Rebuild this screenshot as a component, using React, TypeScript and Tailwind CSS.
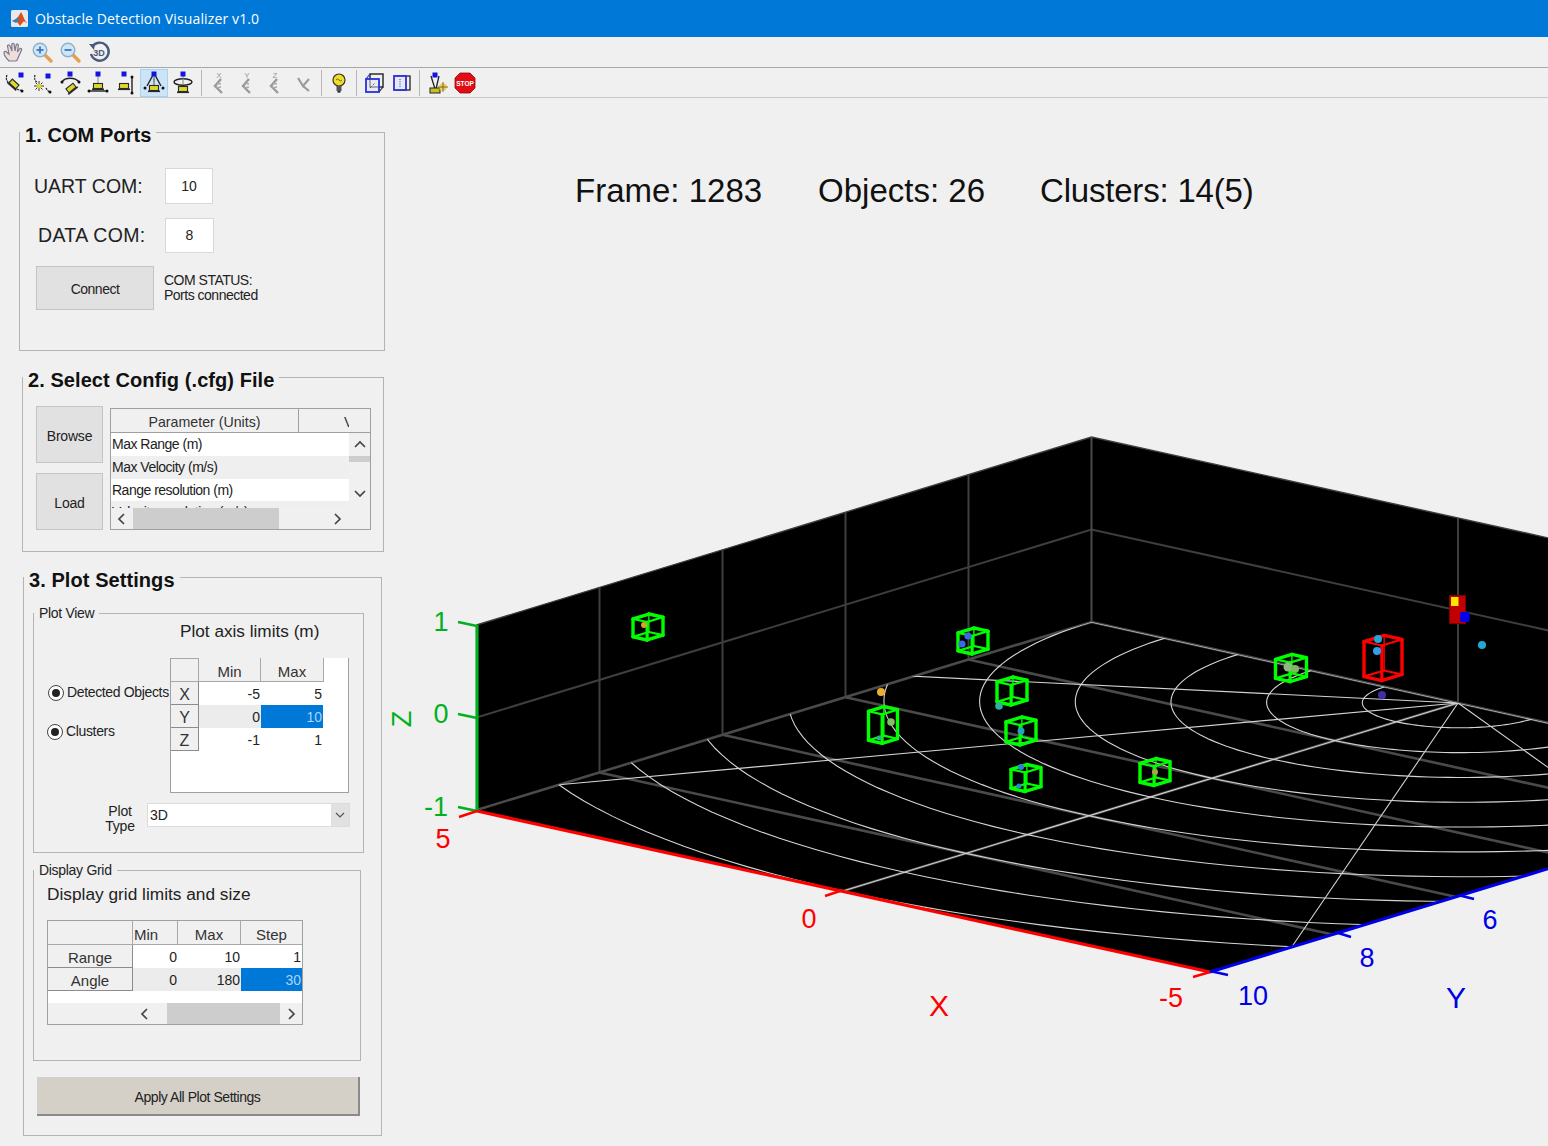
import type { ReactNode } from "react";

const border = "border border-[#a0a0a0]";

// floor projection of the plot: x across the red axis, y along the blue one
const P = (x: number, y: number): [number, number] => [
  1458 - 73.3 * x - 61.5 * y,
  703 - 16.2 * x + 18.8 * y,
];
const Z_UNIT = 92.5;
const pts = (list: [number, number][]) => list.map((p) => p.join(",")).join(" ");

const ringPoints = (r: number) => {
  const out: [number, number][] = [];
  for (let a = 0; a <= 180; a += 2) {
    const t = (a * Math.PI) / 180;
    out.push(P(r * Math.cos(t), r * Math.sin(t)));
  }
  return out;
};

const Cube = ({ cx, cy, w, h, color = "#00ff00" }: { cx: number; cy: number; w: number; h: number; color?: string }) => {
  const a: [number, number] = [w * 0.53, -w * 0.16];
  const c: [number, number] = [w * 0.47, w * 0.105];
  const corner = (i: number, j: number, k: number): [number, number] => [
    cx + (i * a[0] + j * c[0]) / 2,
    cy + (i * a[1] + j * c[1]) / 2 + (k * h) / 2,
  ];
  // last value is the stroke width: outline heavy, hidden inner edges thin
  const edges: [number, number, number, number, number, number, number][] = [
    [-1, -1, -1, 1, -1, -1, 3.4],
    [1, -1, -1, 1, 1, -1, 3.4],
    [1, 1, -1, -1, 1, -1, 2.2],
    [-1, 1, -1, -1, -1, -1, 2.2],
    [-1, -1, 1, 1, -1, 1, 2.2],
    [1, -1, 1, 1, 1, 1, 2.2],
    [1, 1, 1, -1, 1, 1, 3.4],
    [-1, 1, 1, -1, -1, 1, 3.4],
    [-1, -1, -1, -1, -1, 1, 3.4],
    [1, -1, -1, 1, -1, 1, 1.4],
    [1, 1, -1, 1, 1, 1, 3.4],
    [-1, 1, -1, -1, 1, 1, 3.2],
  ];
  return (
    <g stroke={color} strokeLinecap="round">
      {edges.map((e, i) => {
        const s = corner(e[0], e[1], e[2]);
        const t = corner(e[3], e[4], e[5]);
        return <line key={i} x1={s[0]} y1={s[1]} x2={t[0]} y2={t[1]} strokeWidth={e[6]} />;
      })}
    </g>
  );
};

const greenCubes = [
  [648, 627, 30, 18],
  [973, 641, 30, 18],
  [1012, 691, 30, 20],
  [1021, 731, 30, 20],
  [1026, 778, 30, 19],
  [883, 725, 29, 29],
  [1155, 772, 30, 19],
  [1291, 668, 31, 19],
];

const dots: [number, number, number, string][] = [
  [644, 625, 3, "#d8a030"],
  [968, 636, 3.6, "#3d66ee"],
  [962, 644, 3.6, "#3d66ee"],
  [881, 692, 4, "#e8b030"],
  [891, 722, 3.8, "#80c060"],
  [879, 738, 2.5, "#30a8a0"],
  [999, 706, 3.8, "#30b0a0"],
  [1021, 731, 3.5, "#2aa0c0"],
  [1021, 767, 3, "#3080d8"],
  [1019, 786, 2.5, "#3080d8"],
  [1155, 772, 3, "#b0a050"],
  [1288, 667, 4.5, "#90b880"],
  [1295, 669, 4, "#80b860"],
  [1378, 639, 4, "#20a8d8"],
  [1377, 651, 4, "#30a0e8"],
  [1482, 645, 4, "#20a8d0"],
  [1382, 695, 4, "#4030a8"],
];

const PlotLabel = ({ x, y, fill, size = 27, children }: { x: number; y: number; fill: string; size?: number; children: ReactNode }) => (
  <text x={x} y={y} fill={fill} fontSize={size} textAnchor="middle" dominantBaseline="central">
    {children}
  </text>
);

const Plot = () => {
  const floorCorners: [number, number][] = [P(5, 0), P(5, 10), P(-5, 10), P(-5, 0)];
  const back = P(5, 0);
  const left = P(5, 10);
  const right = P(-5, 0);
  const up = (p: [number, number], z: number): [number, number] => [p[0], p[1] - z * Z_UNIT];
  return (
    <svg width={1163} height={736} viewBox="385 410 1163 736" className="block">
      <defs>
        <clipPath id="floor">
          <polygon points={pts(floorCorners)} />
        </clipPath>
      </defs>
      <polygon
        points={pts([up(left, 2), up(back, 2), up(right, 2), right, P(-5, 10), left])}
        fill="#000"
      />
      <g stroke="#3e3e3e" strokeWidth={2} fill="none">
        <polyline points={pts([up(left, 1), up(back, 1), up(right, 1)])} />
        <polyline points={pts([up(left, 2), up(back, 2), up(right, 2)])} strokeWidth={1.4} />
        {[2, 4, 6, 8].map((y) => (
          <line key={y} x1={P(5, y)[0]} y1={P(5, y)[1]} x2={P(5, y)[0]} y2={P(5, y)[1] - 2 * Z_UNIT} />
        ))}
        <line x1={back[0]} y1={back[1]} x2={back[0]} y2={back[1] - 2 * Z_UNIT} stroke="#4a4a4a" />
        <line x1={1458} y1={703} x2={1458} y2={703 - 2 * Z_UNIT} />
      </g>
      <g stroke="#4a4a4a" strokeWidth={2.6} fill="none">
        <polyline points={pts([left, back, right])} />
        {[2, 4, 6, 8].map((y) => (
          <line key={y} x1={P(5, y)[0]} y1={P(5, y)[1]} x2={P(-5, y)[0]} y2={P(-5, y)[1]} />
        ))}
        <line x1={P(0, 0)[0]} y1={P(0, 0)[1]} x2={P(0, 10)[0]} y2={P(0, 10)[1]} />
      </g>
      <g clipPath="url(#floor)" stroke="#d4d4d4" strokeWidth={1.1} fill="none">
        {[1, 2, 3, 4, 5, 6, 7, 8, 9, 10].map((r) => (
          <polyline key={r} points={pts(ringPoints(r))} />
        ))}
        {[0, 30, 60, 90, 120, 150, 180].map((a) => {
          const t = (a * Math.PI) / 180;
          const e = P(10 * Math.cos(t), 10 * Math.sin(t));
          return <line key={a} x1={1458} y1={703} x2={e[0]} y2={e[1]} />;
        })}
      </g>

      {greenCubes.map((c, i) => (
        <Cube key={i} cx={c[0]} cy={c[1]} w={c[2]} h={c[3]} />
      ))}
      <Cube cx={1383} cy={658} w={38} h={35} color="#ff0000" />
      {dots.map((d, i) => (
        <circle key={i} cx={d[0]} cy={d[1]} r={d[2]} fill={d[3]} />
      ))}

      {/* sensor marker */}
      <rect x={1449.5} y={595.5} width={16} height={28} fill="#c00000" stroke="#800000" />
      <rect x={1451} y={597} width={7.5} height={9} fill="#ffe600" />
      <rect x={1460} y={612} width={9.5} height={10} rx={2} fill="#0000ee" />

      {/* axes */}
      <line x1={477} y1={811} x2={1210} y2={972} stroke="#ff0000" strokeWidth={3.2} />
      <line x1={1210} y1={972} x2={1548} y2={868.7} stroke="#0000e6" strokeWidth={3.2} />
      <line x1={477} y1={810} x2={477} y2={625} stroke="#00b020" strokeWidth={3.2} />
      <g stroke="#00b020" strokeWidth={2.4}>
        <line x1={458} y1={622} x2={477} y2={626} />
        <line x1={458} y1={714} x2={477} y2={718} />
        <line x1={458} y1={807} x2={477} y2={811} />
      </g>
      <g stroke="#ff0000" strokeWidth={2.4}>
        <line x1={459} y1={817} x2={477} y2={811} />
        <line x1={825} y1={896} x2={843} y2={890} />
        <line x1={1193} y1={977} x2={1210} y2={972} />
      </g>
      <g stroke="#0000e6" strokeWidth={2.4}>
        <line x1={1210} y1={971} x2={1228} y2={975} />
        <line x1={1335} y1={932} x2={1351} y2={937} />
        <line x1={1458} y1={895} x2={1474} y2={899} />
      </g>

      <PlotLabel x={441} y={622} fill="#00b020">1</PlotLabel>
      <PlotLabel x={441} y={714} fill="#00b020">0</PlotLabel>
      <PlotLabel x={436} y={807} fill="#00b020">-1</PlotLabel>
      <text x={402} y={719} fill="#00b020" fontSize={27} textAnchor="middle" dominantBaseline="central" transform="rotate(-90 402 719)">
        Z
      </text>
      <PlotLabel x={443} y={839} fill="#ff0000">5</PlotLabel>
      <PlotLabel x={809} y={919} fill="#ff0000">0</PlotLabel>
      <PlotLabel x={1171} y={998} fill="#ff0000">-5</PlotLabel>
      <PlotLabel x={939} y={1005} fill="#ff0000" size={30}>X</PlotLabel>
      <PlotLabel x={1253} y={996} fill="#0000e6">10</PlotLabel>
      <PlotLabel x={1367} y={958} fill="#0000e6">8</PlotLabel>
      <PlotLabel x={1490} y={920} fill="#0000e6">6</PlotLabel>
      <PlotLabel x={1456} y={997} fill="#0000e6" size={30}>Y</PlotLabel>
    </svg>
  );
};

const Ico = ({ children, selected }: { children: ReactNode; selected?: boolean }) => (
  <div className={`w-[28px] h-[28px] flex items-center justify-center shrink-0 ${selected ? "bg-[#cce4f7] border border-[#a8d4f2]" : ""}`}>
    <svg width={24} height={24} viewBox="0 0 24 24" className="shrink-0">
      {children}
    </svg>
  </div>
);

const Sep = ({ narrow }: { narrow?: boolean }) => (
  <div className={`w-px h-[26px] bg-[#b8b8b8] shrink-0 ${narrow ? "mx-[3px]" : "mx-[3.5px]"}`} />
);

const Light = ({ x, y }: { x: number; y: number }) => (
  <rect x={x - 2.5} y={y - 2.5} width={5} height={5} fill="#1414e0" />
);
const Cam = ({ x, y, tilt = 0 }: { x: number; y: number; tilt?: number }) => (
  <g transform={`rotate(${tilt} ${x} ${y})`}>
    <rect x={x - 4.5} y={y - 2.5} width={9} height={5} fill="#dcd82c" stroke="#2a2a2a" strokeWidth={1.1} />
    <rect x={x - 6} y={y + 2.5} width={12} height={1.6} fill="#2a2a2a" />
  </g>
);
const Arrow = ({ d }: { d: string }) => <path d={d} stroke="#222" strokeWidth={1.2} fill="none" strokeDasharray="2 0.8" />;
const Tip = ({ x, y }: { x: number; y: number }) => <circle cx={x} cy={y} r={1.5} fill="#111" />;

const Lens = ({ minus }: { minus?: boolean }) => (
  <>
    <line x1={15} y1={15} x2={21} y2={21} stroke="#e6a050" strokeWidth={3.4} strokeLinecap="round" />
    <circle cx={10} cy={10} r={6.8} fill="#cfe6f6" stroke="#8fb0c8" strokeWidth={1.4} />
    <line x1={6.5} y1={10} x2={13.5} y2={10} stroke="#3a78c0" strokeWidth={1.8} />
    {!minus && <line x1={10} y1={6.5} x2={10} y2={13.5} stroke="#3a78c0" strokeWidth={1.8} />}
  </>
);

const AxisIcon = ({ label }: { label: string }) => (
  <>
    <text x={12} y={7} fontSize={8} fill="#999" textAnchor="middle">
      {label}
    </text>
    <polyline points="14,8 8,15 15,22" stroke="#9a9a9a" strokeWidth={2.4} fill="none" />
    <path d="M9 12l5 1M9 17l5-1" stroke="#a8a8a8" strokeWidth={1.3} fill="none" />
  </>
);

const Toolbars = () => (
  <>
    <div className="h-[31px] flex items-center border-b border-[#a8a8a8]">
      <Ico>
        <path
          d="M7 21c-2-2-5-6-5-8s2-2 3-.5L7 14 5.5 6c0-1.6 2-1.6 2.5 0L10 11 9.8 4.5c0-1.6 2.2-1.6 2.4 0L13 11l1.2-6c.4-1.5 2.4-1 2.2.5L15.4 12l2.2-3c1-1.2 2.6-.2 1.9 1.2L16 18c-.6 1.6-1 3-2 3z"
          fill="#f0dcd8"
          stroke="#7a7a90"
          strokeWidth={1.2}
        />
      </Ico>
      <Ico>
        <Lens />
      </Ico>
      <Ico>
        <Lens minus />
      </Ico>
      <div className="ml-px">
        <Ico>
          <path d="M5 7a9 9 0 1 1-1 7" fill="none" stroke="#4a5a78" strokeWidth={2.4} />
          <path d="M2 4l6 0-1 6z" fill="#4a5a78" />
          <text x={12} y={16} fontSize={9} fontWeight={700} fill="#4a5a78" textAnchor="middle">
            3D
          </text>
        </Ico>
      </div>
    </div>
    <div className="h-[30px] flex items-center border-b border-[#c8c8c8]">
      <Ico>
        <Arrow d="M5 4C3 9 6 12 8 11" />
        <Arrow d="M15 18c3 2 5 1 5 1" />
        <Tip x={20} y={20} />
        <Cam x={12} y={13} tilt={42} />
        <Light x={19} y={4} />
      </Ico>
      <Ico>
        <Arrow d="M5 4c-1 4 0 6 2 7" />
        <Arrow d="M16 17c1 2 3 4 4 4" />
        <Tip x={20} y={21} />
        <g stroke="#333" strokeWidth={1}>
          <line x1={4} y1={15} x2={14} y2={15} />
          <line x1={9} y1={10} x2={9} y2={20} />
          <line x1={5.5} y1={11.5} x2={12.5} y2={18.5} />
          <line x1={12.5} y1={11.5} x2={5.5} y2={18.5} />
        </g>
        <circle cx={9} cy={15} r={2.4} fill="#dcd82c" />
        <Light x={18} y={5} />
      </Ico>
      <Ico>
        <path d="M4 11C7 6 17 6 21 11" stroke="#222" strokeWidth={1.4} fill="none" />
        <Tip x={4} y={11} />
        <Tip x={21} y={11} />
        <Cam x={13} y={17} tilt={-38} />
        <Light x={12} y={3} />
      </Ico>
      <Ico>
        <line x1={12} y1={5} x2={12} y2={14} stroke="#888" strokeWidth={1} />
        <Cam x={12} y={15} />
        <line x1={2} y1={20} x2={22} y2={20} stroke="#222" strokeWidth={1.4} />
        <Tip x={3} y={20} />
        <Tip x={21} y={20} />
        <Light x={12} y={3} />
      </Ico>
      <Ico>
        <Cam x={10} y={15} />
        <line x1={18} y1={6} x2={18} y2={22} stroke="#222" strokeWidth={1.4} />
        <Tip x={18} y={6} />
        <Tip x={18} y={22} />
        <Light x={10} y={3} />
      </Ico>
      <Ico selected>
        <path d="M11 4L5 15M13 4l6 11" stroke="#222" strokeWidth={1.4} fill="none" />
        <path d="M11 4l1 10M13 4l-1 10" stroke="#777" strokeWidth={0.8} fill="none" />
        <Cam x={12} y={17} />
        <Tip x={3} y={17} />
        <Tip x={21} y={17} />
        <Light x={12} y={3} />
      </Ico>
      <div className="ml-px">
        <Ico>
          <ellipse cx={12} cy={11} rx={9} ry={3.2} fill="none" stroke="#222" strokeWidth={1.4} />
          <line x1={12} y1={5} x2={12} y2={14} stroke="#888" strokeWidth={1} />
          <Cam x={12} y={18} />
          <Light x={12} y={3} />
        </Ico>
      </div>
      <Sep />
      <Ico>
        <AxisIcon label="X" />
      </Ico>
      <Ico>
        <AxisIcon label="Y" />
      </Ico>
      <Ico>
        <AxisIcon label="Z" />
      </Ico>
      <Ico>
        <polyline points="7,7 12,15 18,8" stroke="#9a9a9a" strokeWidth={2.2} fill="none" />
        <line x1={12} y1={15} x2={18} y2={20} stroke="#9a9a9a" strokeWidth={2.2} />
      </Ico>
      <Sep />
      <Ico>
        <circle cx={12} cy={9} r={6} fill="#f2e020" stroke="#333" strokeWidth={1.2} />
        <path d="M9 9q1.5-2 3 0t3 0" fill="none" stroke="#555" strokeWidth={0.9} />
        <rect x={9.5} y={15} width={5} height={5} fill="#555" />
        <rect x={10.5} y={20} width={3} height={1.6} fill="#222" />
      </Ico>
      <Sep narrow />
      <Ico>
        <rect x={8} y={3} width={13} height={13} fill="none" stroke="#222" strokeWidth={1.4} />
        <line x1={4} y1={8} x2={8} y2={3} stroke="#3030d0" strokeWidth={1.2} />
        <line x1={17} y1={21} x2={21} y2={16} stroke="#222" strokeWidth={1.2} />
        <rect x={4} y={8} width={13} height={13} fill="#dfe6f8" fillOpacity={0.55} stroke="#2a30d8" strokeWidth={1.8} />
        <path d="M8 17l5-5" stroke="#444" strokeDasharray="1 1.2" />
      </Ico>
      <Ico>
        <rect x={7} y={5} width={13} height={14} fill="none" stroke="#222" strokeWidth={1.3} />
        <rect x={4} y={5} width={12} height={14} fill="#e4e8f8" stroke="#2a30d8" strokeWidth={1.8} />
        <line x1={10} y1={8} x2={10} y2={17} stroke="#444" strokeDasharray="1 1.2" />
      </Ico>
      <Sep narrow />
      <Ico>
        <path d="M6 5l4 13M14 5l-3 13" stroke="#222" strokeWidth={1.3} fill="none" />
        <Light x={10} y={4} />
        <rect x={5} y={17} width={10} height={5} fill="#c8c020" stroke="#222" />
        <circle cx={18} cy={16} r={3.8} fill="#e8d060" />
        <path d="M18 11v10M13 16h10" stroke="#706020" strokeWidth={0.9} />
      </Ico>
      <Ico>
        <polygon points="7,2 17,2 22,7 22,17 17,22 7,22 2,17 2,7" fill="#e40c14" stroke="#8a0a0a" strokeWidth={0.8} />
        <text x={12} y={14.5} fontSize={6.5} fontWeight={700} fill="#fff" textAnchor="middle">
          STOP
        </text>
      </Ico>
    </div>
  </>
);

const Panel = ({ title, className, children }: { title: string; className: string; children: ReactNode }) => (
  <fieldset className={`border border-[#b4b4b4] min-w-0 ${className}`}>
    <legend className="h-6 pt-[5px] leading-5 px-[5px] text-[20px] font-bold text-[#111] tracking-[0.07px]">{title}</legend>
    {children}
  </fieldset>
);

const SubPanel = ({ title, className, children }: { title: string; className: string; children: ReactNode }) => (
  <fieldset className={`border border-[#b4b4b4] min-w-0 ${className}`}>
    <legend className="h-[18px] leading-[18px] px-[5px] text-[14px] text-[#222] tracking-[-0.3px]">{title}</legend>
    {children}
  </fieldset>
);

const GrayButton = ({ label, className }: { label: string; className: string }) => (
  <button className={`bg-[#e1e1e1] border border-[#c4c4c4] text-[14px] text-[#222] pt-[3px] tracking-[-0.2px] ${className}`}>{label}</button>
);

const Chevron = ({ dir }: { dir: "up" | "down" | "left" | "right" }) => {
  const d = { up: "M1 7l5-5 5 5", down: "M1 2l5 5 5-5", left: "M7 1L2 6l5 5", right: "M2 1l5 5-5 5" }[dir];
  const vert = dir === "up" || dir === "down";
  return (
    <svg width={vert ? 12 : 9} height={vert ? 9 : 12} viewBox={vert ? "0 0 12 9" : "0 0 9 12"} className="shrink-0">
      <path d={d} fill="none" stroke="#444" strokeWidth={1.7} />
    </svg>
  );
};

const Radio = ({ label, className }: { label: string; className?: string }) => (
  <div className={`flex items-center gap-[3px] whitespace-nowrap text-[14px] text-[#222] tracking-[-0.35px] ${className ?? ""}`}>
    <span className="w-4 h-4 rounded-full border border-[#444] bg-white flex items-center justify-center shrink-0">
      <span className="w-2 h-2 rounded-full bg-[#222]" />
    </span>
    {label}
  </div>
);

const axisRows = [
  { name: "X", min: "-5", max: "5" },
  { name: "Y", min: "0", max: "10" },
  { name: "Z", min: "-1", max: "1" },
];

const AxisTable = () => (
  <div className="w-[179px] h-[135px] bg-white border-x border-b border-[#a0a0a0] text-[14px] text-[#222]">
    <div className="flex h-[24px] text-[15px] text-[#333]">
      <div className="w-[28px] bg-[#f0f0f0] border-t border-r border-b border-[#a8a8a8]" />
      <div className="w-[62px] bg-[#f0f0f0] border-r border-b border-[#a8a8a8] text-center leading-[28px]">Min</div>
      <div className="w-[63px] bg-[#f0f0f0] border-r border-b border-[#a8a8a8] text-center leading-[28px]">Max</div>
    </div>
    {axisRows.map((r, i) => (
      <div key={r.name} className="flex h-[23px] leading-[25px]">
        <div className="w-[28px] bg-[#f0f0f0] border-r border-b border-[#8c8c8c] text-center text-[16px] text-[#333]">{r.name}</div>
        <div className={`w-[62px] text-right pr-[1px] ${i === 1 ? "bg-[#ececec]" : "bg-white"}`}>{r.min}</div>
        <div className={`w-[62px] text-right pr-[1px] ${i === 1 ? "bg-[#0078d7] text-[#a8d4f8]" : "bg-white"}`}>{r.max}</div>
      </div>
    ))}
  </div>
);

const gridRows = [
  { name: "Range", cells: ["0", "10", "1"] },
  { name: "Angle", cells: ["0", "180", "30"] },
];

const GridTable = () => (
  <div className="w-[256px] h-[105px] bg-white border border-[#a0a0a0] text-[14px] text-[#222]">
    <div className="flex h-[24px] text-[15px] text-[#333] bg-[#f0f0f0] leading-[27px]">
      <div className="w-[85px] border-r border-b border-[#a8a8a8]" />
      <div className="w-[45px] border-r border-b border-[#a8a8a8] pl-[1px]">Min</div>
      <div className="w-[63px] border-r border-b border-[#a8a8a8] text-center">Max</div>
      <div className="w-[61px] border-b border-[#a8a8a8] text-center">Step</div>
    </div>
    {gridRows.map((r, i) => (
      <div key={r.name} className="flex h-[23px] leading-[25px]">
        <div className="w-[85px] bg-[#f0f0f0] border-r border-b border-[#8c8c8c] text-center text-[15px] text-[#333]">{r.name}</div>
        <div className={`w-[45px] text-right pr-[1px] ${i === 1 ? "bg-[#ececec]" : ""}`}>{r.cells[0]}</div>
        <div className={`w-[63px] text-right pr-[1px] ${i === 1 ? "bg-[#ececec]" : ""}`}>{r.cells[1]}</div>
        <div className={`w-[61px] text-right pr-[1px] ${i === 1 ? "bg-[#0078d7] text-[#a8d4f8]" : ""}`}>{r.cells[2]}</div>
      </div>
    ))}
    <div className="h-[12px]" />
    <div className="h-[21px] bg-[#f0f0f0] flex items-center">
      <div className="w-[119px] flex justify-end pr-[18px]">
        <Chevron dir="left" />
      </div>
      <div className="w-[113px] h-full bg-[#cdcdcd]" />
      <div className="pl-[7px]">
        <Chevron dir="right" />
      </div>
    </div>
  </div>
);

const configRows = ["Max Range (m)", "Max Velocity (m/s)", "Range resolution (m)", "Velocity resolution (m/s)"];
const configHeights = ["h-[23px]", "h-[23px]", "h-[22px]", "h-[7px]"];

const ConfigTable = () => (
  <div className={`w-[261px] h-[122px] ${border} border-[#8c8c8c] bg-[#f0f0f0] text-[14px] text-[#222] tracking-[-0.5px]`}>
    <div className="flex h-[24px] border-b border-[#a0a0a0] leading-[26px] text-[14.2px] text-[#333] tracking-normal">
      <div className="w-[188px] border-r border-[#a0a0a0] text-center">Parameter (Units)</div>
      <div className="w-[50px] overflow-hidden whitespace-nowrap pl-[45px]">Value</div>
    </div>
    <div className="flex h-[75px]">
      <div className="w-[238px] overflow-hidden">
        {configRows.map((row, i) => (
          <div
            key={row}
            className={`${configHeights[i]} overflow-hidden whitespace-nowrap pl-[1px] leading-[22px] ${i % 2 === 0 ? "bg-white" : "bg-[#efefef]"}`}
          >
            {row}
          </div>
        ))}
      </div>
      <div className="w-[21px] flex flex-col items-center">
        <div className="h-[23px] flex items-center justify-center">
          <Chevron dir="up" />
        </div>
        <div className="h-[6px] w-full bg-[#cdcdcd]" />
        <div className="flex-1 flex items-center justify-center pt-[16px]">
          <Chevron dir="down" />
        </div>
      </div>
    </div>
    <div className="h-[21px] flex items-center">
      <div className="w-[22px] flex justify-end pr-[7px]">
        <Chevron dir="left" />
      </div>
      <div className="w-[146px] h-full bg-[#cdcdcd]" />
      <div className="pl-[54px]">
        <Chevron dir="right" />
      </div>
    </div>
  </div>
);

export default function App() {
  return (
    <div className="w-[1548px] h-[1146px] bg-[#f0f0f0] overflow-hidden flex flex-col font-['Liberation_Sans',Arial,sans-serif]">
      <div className="h-[37px] bg-[#0078d7] flex items-center pl-[11px] gap-[7px] shrink-0">
        <svg width={17} height={17} viewBox="0 0 17 17">
          <rect width={17} height={17} rx={1.5} fill="#e8e8ee" />
          <path d="M1 11l4-2 2-2 3-5c2 3 3 8 6 11-2-1-3-2-4-1-1 1-2 3-3 4-1-2-3-4-4-5z" fill="#d8531c" />
          <path d="M1 11l4-2 2-2 1 3-3 3z" fill="#3a7fb8" />
        </svg>
        <span className="text-white text-[14px] font-['Open_Sans',sans-serif] tracking-[0.13px]">Obstacle Detection Visualizer v1.0</span>
      </div>

      <div className="shrink-0 h-[62px]">
        <Toolbars />
      </div>

      <div className="flex flex-1 min-h-0">
        <div className="w-[385px] shrink-0 pl-[19px]">
          <Panel title="1. COM Ports" className="mt-[21px] w-[366px] h-[231px]">
            <div className="flex items-center mt-[24px]">
              <span className="w-[145px] pl-[14px] pt-[2px] text-[19.5px] text-[#222]">UART COM:</span>
              <div className="w-[48px] h-[36px] bg-white border border-[#d8d8d8] text-[14px] text-[#222] flex items-center justify-center">10</div>
            </div>
            <div className="flex items-center mt-[14px]">
              <span className="w-[127px] ml-[18px] text-[19.5px] text-[#222] tracking-[0.35px]">DATA COM:</span>
              <div className="w-[49px] h-[35px] bg-white border border-[#d8d8d8] text-[14px] text-[#222] flex items-center justify-center">8</div>
            </div>
            <div className="flex items-center mt-[13px] ml-[16px]">
              <GrayButton label="Connect" className="w-[118px] h-[44px] tracking-[-0.5px]" />
              <div className="ml-[10px] text-[14px] leading-[15px] text-[#222] tracking-[-0.5px]">
                <div>COM STATUS:</div>
                <div>Ports connected</div>
              </div>
            </div>
          </Panel>

          <Panel title="2. Select Config (.cfg) File" className="mt-[14px] ml-[3px] w-[362px] h-[187px]">
            <div className="flex ml-[13px]">
              <div className="w-[67px] mt-[17px] flex flex-col gap-[10px]">
                <GrayButton label="Browse" className="h-[57px]" />
                <GrayButton label="Load" className="h-[57px]" />
              </div>
              <div className="ml-[7px] mt-[19px]">
                <ConfigTable />
              </div>
            </div>
          </Panel>

          <Panel title="3. Plot Settings" className="mt-[13px] ml-[4px] w-[359px] h-[571px]">
            <div className="pl-[9px] pt-[15px]">
              <SubPanel title="Plot View" className="w-[331px] h-[249px]">
                <div className="h-[18px] leading-[18px] ml-[146px] text-[17.2px] text-[#222]">Plot axis limits (m)</div>
                <div className="flex mt-[18px]">
                  <div className="w-[136px] pl-[14px] pt-[24px]">
                    <Radio label="Detected Objects" />
                    <Radio label="Clusters" className="mt-[18px] -ml-[1px]" />
                  </div>
                  <AxisTable />
                </div>
                <div className="flex mt-[10px]">
                  <div className="w-[54px] ml-[59px] text-center text-[14px] leading-[15px] text-[#222] pt-[1px] tracking-[-0.2px]">
                    Plot
                    <br />
                    Type
                  </div>
                  <div className="w-[203px] h-[24px] bg-white border border-[#dcdcdc] flex items-center text-[14px] text-[#222] pl-[2px]">
                    <span className="flex-1">3D</span>
                    <div className="w-[18px] h-full bg-[#e1e1e1] flex items-center justify-center">
                      <svg width={10} height={7} viewBox="0 0 10 7">
                        <path d="M1 1l4 4 4-4" fill="none" stroke="#555" strokeWidth={1.2} />
                      </svg>
                    </div>
                  </div>
                </div>
              </SubPanel>
              <SubPanel title="Display Grid" className="mt-[8px] w-[328px] h-[200px]">
                <div className="h-[18px] leading-[18px] mt-[6px] ml-[13px] text-[17.3px] text-[#222]">Display grid limits and size</div>
                <div className="ml-[13px] mt-[17px]">
                  <GridTable />
                </div>
              </SubPanel>
            </div>
            <button className="mt-[16px] ml-[13px] w-[323px] h-[39px] pt-[3px] bg-[#d4d0c8] border-r-2 border-b-2 border-[#8a8a8a] text-[14px] text-[#222] tracking-[-0.45px]">
              Apply All Plot Settings
            </button>
          </Panel>
        </div>

        <div className="flex-1 min-w-0">
          <div className="h-[311px] pt-[73px] pl-[190px] flex gap-[56px] text-[33px] leading-[38px] text-[#111]">
            <span>Frame: 1283</span>
            <span>Objects: 26</span>
            <span className="-ml-px tracking-[-0.2px]">Clusters: 14(5)</span>
          </div>
          <Plot />
        </div>
      </div>
    </div>
  );
}
